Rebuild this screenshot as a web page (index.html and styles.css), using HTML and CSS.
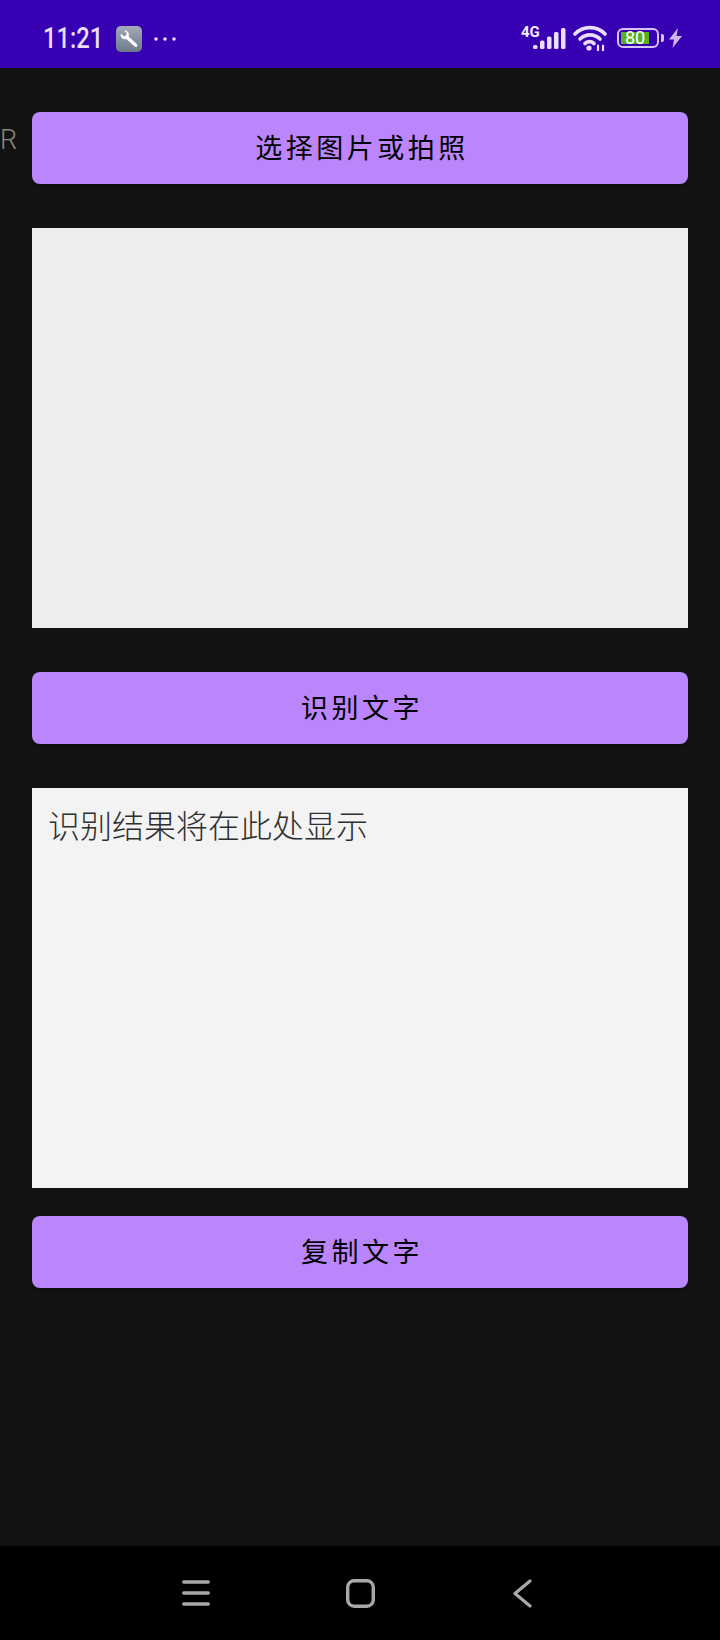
FILE: index.html
```html
<!DOCTYPE html>
<html lang="zh-CN">
<head>
<meta charset="utf-8">
<title>文字识别</title>
<link rel="stylesheet" href="styles.css">
</head>
<body>
<div class="screen">
  <header class="status">
    <div class="status-left">
      <span class="time">11:21</span>
      <svg class="tool" viewBox="0 0 26 26" width="26" height="26">
        <defs><linearGradient id="g" x1="0" y1="0" x2="0" y2="1"><stop offset="0" stop-color="#a3aab8"/><stop offset="1" stop-color="#6d7a8a"/></linearGradient></defs>
        <rect width="26" height="26" rx="5" fill="url(#g)"/>
        <path d="M8 4.200 10.800 7l-.6 2.600-2.600.6L4.800 7.400A5 5 0 0 0 6 12.200a5 5 0 0 0 4.400.9l7.900 7.200c1 .9 2 .8 2.600.1.700-.7.700-1.700-.2-2.500l-7.900-7.200A5 5 0 0 0 12 6a5 5 0 0 0-4-1.800z" fill="#fff"/>
      </svg>
      <svg class="dots" viewBox="0 0 22 4" width="22" height="4"><circle cx="2" cy="2" r="1.800"/><circle cx="11" cy="2" r="1.800"/><circle cx="20" cy="2" r="1.800"/></svg>
    </div>
    <div class="status-right">
      <div class="signal">
        <span class="net">4G</span>
        <svg viewBox="0 0 33 21" width="33" height="21"><g fill="#eaddff"><rect x="0" y="17" width="4.500" height="4" rx="1.500"/><rect x="7" y="12.500" width="4.500" height="8.500" rx="1.500"/><rect x="14" y="8.500" width="4.500" height="12.500" rx="1.500"/><rect x="21" y="4" width="4.500" height="17" rx="1.500"/><rect x="28" y="0" width="4.500" height="21" rx="1.500"/></g></svg>
      </div>
      <svg class="wifi" viewBox="0 0 34 26" width="34" height="26" fill="none" stroke="#eaddff" stroke-width="3.600" stroke-linecap="round">
        <path d="M2 9C10 .5 24 .5 32 9"/><path d="M7 14c6-5.500 14-5.500 20 0"/><path d="M12 18.500c3-2.500 6-2.500 9 0"/>
        <circle cx="16" cy="23" r="2.600" fill="#eaddff" stroke="none"/>
        <path d="M25 20.500v5M30 20.500v5" stroke-width="2.200"/>
      </svg>
      <div class="battery">
        <div class="cell"><span class="level">80</span></div>
        <span class="nub"></span>
      </div>
      <svg class="bolt" viewBox="0 0 13 20" width="13" height="20"><path d="M9 0 0 11.500h5L3.500 20 13 8H7.500z" fill="#cdb8f0"/></svg>
    </div>
  </header>

  <main class="content">
    <span class="edge-letter">R</span>
    <button class="action"><span class="label">选择图片或拍照</span></button>
    <div class="preview"></div>
    <button class="action"><span class="label">识别文字</span></button>
    <div class="result">识别结果将在此处显示</div>
    <button class="action action-tight"><span class="label">复制文字</span></button>
  </main>

  <nav class="navbar">
    <svg viewBox="0 0 28 26" width="28" height="26" fill="none" stroke="#a8a8a8" stroke-width="3.500" stroke-linecap="round"><path d="M1.800 2h24.400M1.800 13h24.400M1.800 24h24.400"/></svg>
    <svg viewBox="0 0 29 29" width="29" height="29" fill="none" stroke="#a8a8a8" stroke-width="3.400"><rect x="1.700" y="1.700" width="25.600" height="25.600" rx="6.500"/></svg>
    <svg class="nav-back" viewBox="0 0 19 29" width="19" height="29" fill="none" stroke="#a8a8a8" stroke-width="3.200" stroke-linecap="round" stroke-linejoin="round"><path d="M17 2 2 14.500 17 27"/></svg>
  </nav>
</div>
</body>
</html>
```

FILE: styles.css
```css
* { box-sizing: border-box; }
html, body { margin: 0; padding: 0; }
body { width: 720px; height: 1640px; background: #121212; font-family: "Noto Sans CJK SC", "Noto Sans", sans-serif; overflow: hidden; }
.screen { display: flex; flex-direction: column; width: 720px; height: 1640px; }

.status { flex: 0 0 68px; height: 68px; background: #3700b3; display: flex; justify-content: space-between; align-items: center; padding: 9px 38px 0 43px; color: #eaddff; }
.status-left { display: flex; align-items: center; }
.time { font: 500 29px/1 Roboto, sans-serif; width: 73px; color: #eaddff; transform: scaleX(.82); transform-origin: left center; }
.tool { display: block; }
.dots { display: block; margin-left: 12px; fill: #eaddff; }
.status-right { display: flex; align-items: center; }
.signal { display: flex; position: relative; width: 45px; height: 26px; justify-content: flex-end; align-items: flex-end; margin-bottom: 5px; }
.net { position: absolute; left: 0; top: 2px; font: 700 15px/1 Roboto, sans-serif; color: #f4eeff; }
.wifi { display: block; margin-left: 7px; margin-bottom: 1px; }
.battery { display: flex; align-items: center; margin-left: 10px; margin-bottom: 2px; }
.cell { width: 42px; height: 20px; border: 2px solid #d6c4f5; border-radius: 6px; padding: 2px; }
.level { display: block; width: 28px; height: 12px; background: #5bb01f; color: #fff; font: 400 18px/12px Roboto, sans-serif; text-align: center; }
.nub { width: 3px; height: 8px; background: #d6c4f5; border-radius: 0 2px 2px 0; margin-left: 2px; }
.bolt { display: block; margin-left: 5px; margin-bottom: 2px; }

.content { position: relative; flex: 1; display: flex; flex-direction: column; padding: 44px 32px 0; }
.edge-letter { position: absolute; left: 0; top: 56px; font: 300 27px/1.2 Roboto, sans-serif; color: #8f867b; }
.action { height: 72px; flex: none; border: 0; border-radius: 8px; background: #bb86fc; color: #000; font-family: "Noto Sans CJK SC", sans-serif; font-size: 27px; font-weight: 400; letter-spacing: 3.500px; padding: 0 0 3px 4px; box-shadow: 0 2px 3px rgba(0,0,0,.25); }
.action-tight { margin-top: 28px; }
.preview { height: 400px; flex: none; margin: 44px 0; background: #eeeeee; }
.result { height: 400px; flex: none; margin-top: 44px; background: #f3f3f3; color: #2e2e2e; padding: 14px 16px; font-size: 32px; font-weight: 300; line-height: 44px; }

.navbar { flex: 0 0 94px; height: 94px; background: #000; display: flex; align-items: center; gap: 136px; padding-left: 182px; }
.nav-back { margin-left: 2px; }
```
